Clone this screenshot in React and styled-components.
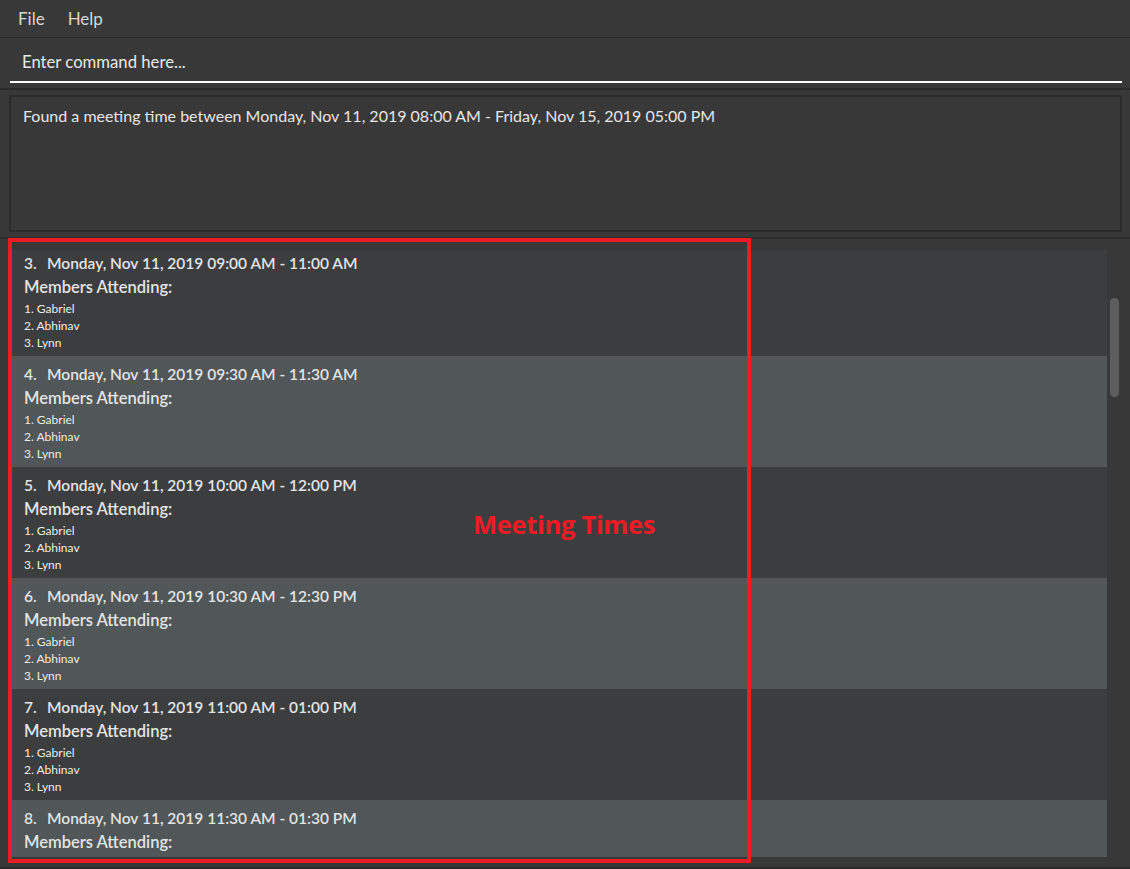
import React from "react";
import styled, { createGlobalStyle } from "styled-components";

const Global = createGlobalStyle`
  html, body { margin: 0; padding: 0; background: #383838; }
  body { font-family: "Segoe UI", Lato, "Open Sans", sans-serif; overflow: hidden; }
  #root { height: 869px; }
`;

const Page = styled.div`
  position: relative;
  width: 1130px;
  height: 869px;
  background: #383838;
  display: flex;
  flex-direction: column;
  box-sizing: border-box;
  border-bottom: 2px solid #2b2b2b;
`;

const MenuBar = styled.div`
  height: 37px;
  display: flex;
  align-items: center;
  gap: 23px;
  padding-left: 18px;
  border-bottom: 1px solid #2b2b2b;
`;

const MenuItem = styled.span`
  color: #d6d6d6;
  font-size: 17px;
`;

const CommandArea = styled.div`
  height: 52px;
  box-sizing: border-box;
  padding: 0 8px 0 10px;
  border-bottom: 2px solid #2b2b2b;
  display: flex;
  align-items: flex-start;
`;

const CommandInput = styled.div`
  flex: 1;
  height: 45px;
  box-sizing: border-box;
  padding: 14px 0 0 12px;
  border-bottom: 2px solid #ffffff;
  color: #e8e8e8;
  font-size: 16.7px;
  line-height: 21px;
`;

const ResultArea = styled.div`
  padding: 5px 8px 5px 9px;
  border-bottom: 2px solid #2b2b2b;
`;

const ResultBox = styled.div`
  height: 137px;
  box-sizing: border-box;
  border: 2px solid #2b2b2b;
  padding: 9px 12px;
  color: #e6e6e6;
  font-size: 16px;
  line-height: 20px;
`;

const ListArea = styled.div`
  flex: 1;
  display: flex;
  padding: 11px 0 0 10px;
  min-height: 0;
`;

const List = styled.div`
  width: 1097px;
  height: 607px;
  overflow: hidden;
`;

const ListInner = styled.div`
  margin-top: -5px;
`;

const Cell = styled.div`
  height: 111px;
  box-sizing: border-box;
  padding: 6px 14px 0;
  background: ${(p) => (p.$alt ? "#515658" : "#3c3d3f")};
  display: flex;
  flex-direction: column;
`;

const Title = styled.div`
  display: flex;
  color: #e4e4e4;
  font-size: 15.5px;
  font-weight: 600;
  line-height: 24px;
  white-space: pre;
`;

const Index = styled.span`
  width: 23px;
`;

const Subtitle = styled.div`
  color: #e4e4e4;
  font-size: 16.5px;
  font-weight: 600;
  line-height: 22px;
  margin-top: 1px;
`;

const MemberList = styled.div`
  margin-top: 2px;
  display: flex;
  flex-direction: column;
`;

const Member = styled.div`
  color: #ececec;
  font-size: 12px;
  line-height: 17px;
`;

const ScrollTrack = styled.div`
  width: 23px;
  position: relative;
`;

const Thumb = styled.div`
  position: absolute;
  left: 3px;
  top: 48px;
  width: 9px;
  height: 99px;
  border-radius: 5px;
  background: #5e5e5e;
`;

const Highlight = styled.div`
  position: absolute;
  left: 8px;
  top: 238px;
  width: 743px;
  height: 625px;
  box-sizing: border-box;
  border: 4px solid #ed1c24;
  pointer-events: none;
`;

const Label = styled.div`
  position: absolute;
  left: 473px;
  top: 507px;
  color: #ed1c24;
  font-family: "Open Sans", Lato, sans-serif;
  font-weight: 700;
  font-size: 25.5px;
  line-height: 34px;
  letter-spacing: -0.3px;
`;

const meetings = [
  { n: 3, t: "Monday, Nov 11, 2019 09:00 AM - 11:00 AM" },
  { n: 4, t: "Monday, Nov 11, 2019 09:30 AM - 11:30 AM" },
  { n: 5, t: "Monday, Nov 11, 2019 10:00 AM - 12:00 PM" },
  { n: 6, t: "Monday, Nov 11, 2019 10:30 AM - 12:30 PM" },
  { n: 7, t: "Monday, Nov 11, 2019 11:00 AM - 01:00 PM" },
  { n: 8, t: "Monday, Nov 11, 2019 11:30 AM - 01:30 PM" },
];

const members = ["Gabriel", "Abhinav", "Lynn"];

export default function App() {
  return (
    <>
      <Global />
      <Page>
        <MenuBar>
          <MenuItem>File</MenuItem>
          <MenuItem>Help</MenuItem>
        </MenuBar>
        <CommandArea>
          <CommandInput>Enter command here...</CommandInput>
        </CommandArea>
        <ResultArea>
          <ResultBox>
            Found a meeting time between Monday, Nov 11, 2019 08:00 AM - Friday, Nov 15, 2019 05:00 PM
          </ResultBox>
        </ResultArea>
        <ListArea>
          <List>
            <ListInner>
              {meetings.map((m, i) => (
                <Cell key={m.n} $alt={i % 2 === 1}>
                  <Title>
                    <Index>{`${m.n}.`}</Index>
                    <span>{m.t}</span>
                  </Title>
                  <Subtitle>Members Attending:</Subtitle>
                  <MemberList>
                    {members.map((name, j) => (
                      <Member key={name}>{`${j + 1}. ${name}`}</Member>
                    ))}
                  </MemberList>
                </Cell>
              ))}
            </ListInner>
          </List>
          <ScrollTrack>
            <Thumb />
          </ScrollTrack>
        </ListArea>
        <Highlight />
        <Label>Meeting Times</Label>
      </Page>
    </>
  );
}
